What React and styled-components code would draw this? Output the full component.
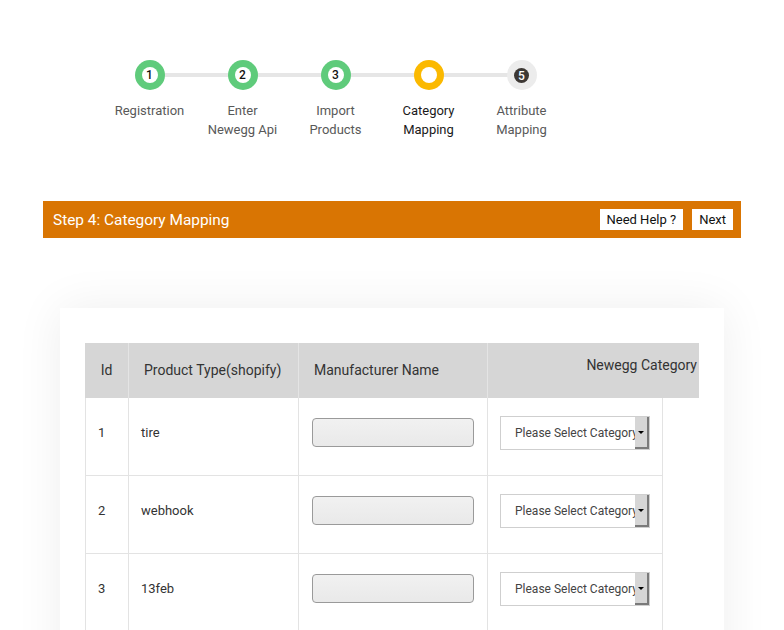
import styled, { createGlobalStyle } from 'styled-components';

const steps = [
  { n: 1, label: ['Registration'], state: 'done' },
  { n: 2, label: ['Enter', 'Newegg Api'], state: 'done' },
  { n: 3, label: ['Import', 'Products'], state: 'done' },
  { n: 4, label: ['Category', 'Mapping'], state: 'active' },
  { n: 5, label: ['Attribute', 'Mapping'], state: 'todo' },
];

const rows = [
  { id: 1, type: 'tire' },
  { id: 2, type: 'webhook' },
  { id: 3, type: '13feb' },
];

function App() {
  return (
    <Page>
      <GlobalStyle />
      <Steps>
        {steps.map((s, i) => (
          <Step key={s.n} $first={i === 0}>
            <Circle $state={s.state}>
              <Dot $state={s.state}>{s.state === 'active' ? '' : s.n}</Dot>
            </Circle>
            <StepLabel $active={s.state === 'active'}>
              {s.label.map((l) => (
                <div key={l}>{l}</div>
              ))}
            </StepLabel>
          </Step>
        ))}
      </Steps>

      <Bar>
        <BarTitle>Step 4: Category Mapping</BarTitle>
        <BarButtons>
          <BarButton>Need Help ?</BarButton>
          <BarButton>Next</BarButton>
        </BarButtons>
      </Bar>

      <Card>
        <HeadRow>
          <HeadCell>Id</HeadCell>
          <HeadCell $pad="15px">Product Type(shopify)</HeadCell>
          <HeadCell $pad="15px">Manufacturer Name</HeadCell>
          <HeadCell $right>Newegg Category</HeadCell>
        </HeadRow>
        {rows.map((r) => (
          <BodyRow key={r.id}>
            <Cell>{r.id}</Cell>
            <Cell>{r.type}</Cell>
            <Cell>
              <TextInput type="text" />
            </Cell>
            <Cell $last>
              <SelectBox>
                <SelectText>Please Select Category</SelectText>
                <SelectArrow />
              </SelectBox>
            </Cell>
          </BodyRow>
        ))}
      </Card>
    </Page>
  );
}

const GlobalStyle = createGlobalStyle`
  html, body {
    margin: 0;
    padding: 0;
    background: #fff;
    font-family: Roboto, 'Noto Sans', sans-serif;
    overflow: hidden;
  }
`;

const Page = styled.div`
  width: 784px;
  height: 630px;
  overflow: hidden;
`;

const Steps = styled.ul`
  list-style: none;
  margin: 0;
  padding: 60px 0 0 103px;
  display: flex;
`;

const Step = styled.li`
  position: relative;
  width: 93px;
  display: flex;
  flex-direction: column;
  align-items: center;

  &::before {
    content: '';
    display: ${(p) => (p.$first ? 'none' : 'block')};
    position: absolute;
    top: 13px;
    left: -46px;
    width: 93px;
    height: 4px;
    background: #e6e6e6;
  }
`;

const circleColors = {
  done: '#5fcb7b',
  active: '#fbb900',
  todo: '#ececec',
};

const Circle = styled.div`
  position: relative;
  z-index: 1;
  width: 30px;
  height: 30px;
  border-radius: 50%;
  background: ${(p) => circleColors[p.$state]};
  display: flex;
  align-items: center;
  justify-content: center;
`;

const Dot = styled.div`
  width: ${(p) => (p.$state === 'todo' ? '15px' : '16px')};
  height: ${(p) => (p.$state === 'todo' ? '15px' : '16px')};
  border-radius: 50%;
  background: ${(p) => (p.$state === 'todo' ? '#3d3834' : '#fff')};
  color: ${(p) => (p.$state === 'todo' ? '#fff' : '#111')};
  font-size: 12px;
  font-weight: 500;
  line-height: 16px;
  text-align: center;
`;

const StepLabel = styled.div`
  margin-top: 11px;
  font-size: 13px;
  line-height: 19px;
  text-align: center;
  color: ${(p) => (p.$active ? '#1a1a1a' : '#595959')};
  white-space: nowrap;
`;

const Bar = styled.div`
  margin: 62px 43px 0 43px;
  height: 37px;
  background: #d97503;
  display: flex;
  align-items: center;
  justify-content: space-between;
  padding: 0 8px 0 10px;
`;

const BarTitle = styled.div`
  color: #fff;
  font-size: 15.4px;
`;

const BarButtons = styled.div`
  display: flex;
  gap: 9px;
`;

const BarButton = styled.button`
  height: 21px;
  padding: 0 7px;
  border: none;
  background: #fff;
  color: #111;
  font-family: Roboto, sans-serif;
  font-size: 13px;
  cursor: pointer;
`;

const Card = styled.div`
  margin: 70px 0 0 60px;
  width: 614px;
  padding: 35px 25px 0 25px;
  background: #fff;
  box-shadow: 0 0 45px rgba(0, 0, 0, 0.07);
  height: 400px;
`;

const HeadRow = styled.div`
  display: grid;
  grid-template-columns: 43px 170px 189px 212px;
  height: 55px;
  background: #d6d6d6;
`;

const HeadCell = styled.div`
  display: flex;
  align-items: center;
  justify-content: ${(p) => (p.$right ? 'flex-end' : p.$pad ? 'flex-start' : 'center')};
  padding: ${(p) => (p.$right ? '0 2px 12px 0' : `0 0 2px ${p.$pad || '0'}`)};
  border-left: 1px solid #e4e4e4;
  font-size: 14px;
  color: #333;

  &:first-child {
    border-left: none;
  }
`;

const BodyRow = styled.div`
  display: grid;
  grid-template-columns: 43px 170px 189px 176px;
  height: 78px;
`;

const Cell = styled.div`
  display: flex;
  align-items: center;
  padding: 0 0 8px 12px;
  border-left: 1px solid #e3e3e3;
  border-bottom: 1px solid #e3e3e3;
  border-right: ${(p) => (p.$last ? '1px solid #e3e3e3' : 'none')};
  font-size: 13px;
  color: #333;
`;

const TextInput = styled.input`
  box-sizing: border-box;
  width: 162px;
  height: 29px;
  margin: 0 0 0 1px;
  border: 1px solid #9a9a9a;
  border-radius: 4px;
  background: linear-gradient(#f1f1f1, #e9e9e9);
  outline: none;
`;

const SelectBox = styled.div`
  box-sizing: border-box;
  width: 150px;
  height: 34px;
  border: 1px solid #cfcfcf;
  background: #fff;
  display: flex;
  align-items: stretch;
  overflow: hidden;
`;

const SelectText = styled.div`
  flex: 1;
  overflow: hidden;
  white-space: nowrap;
  padding-left: 14px;
  font-size: 12px;
  color: #444;
  line-height: 32px;
`;

const SelectArrow = styled.div`
  box-sizing: border-box;
  width: 14px;
  background: #d6d6d6;
  border-right: 2px solid #7a7a7a;
  border-bottom: 2px solid #7a7a7a;
  position: relative;

  &::after {
    content: '';
    position: absolute;
    top: 14px;
    left: 3px;
    border-left: 3px solid transparent;
    border-right: 3px solid transparent;
    border-top: 3px solid #000;
  }
`;

export default App;
